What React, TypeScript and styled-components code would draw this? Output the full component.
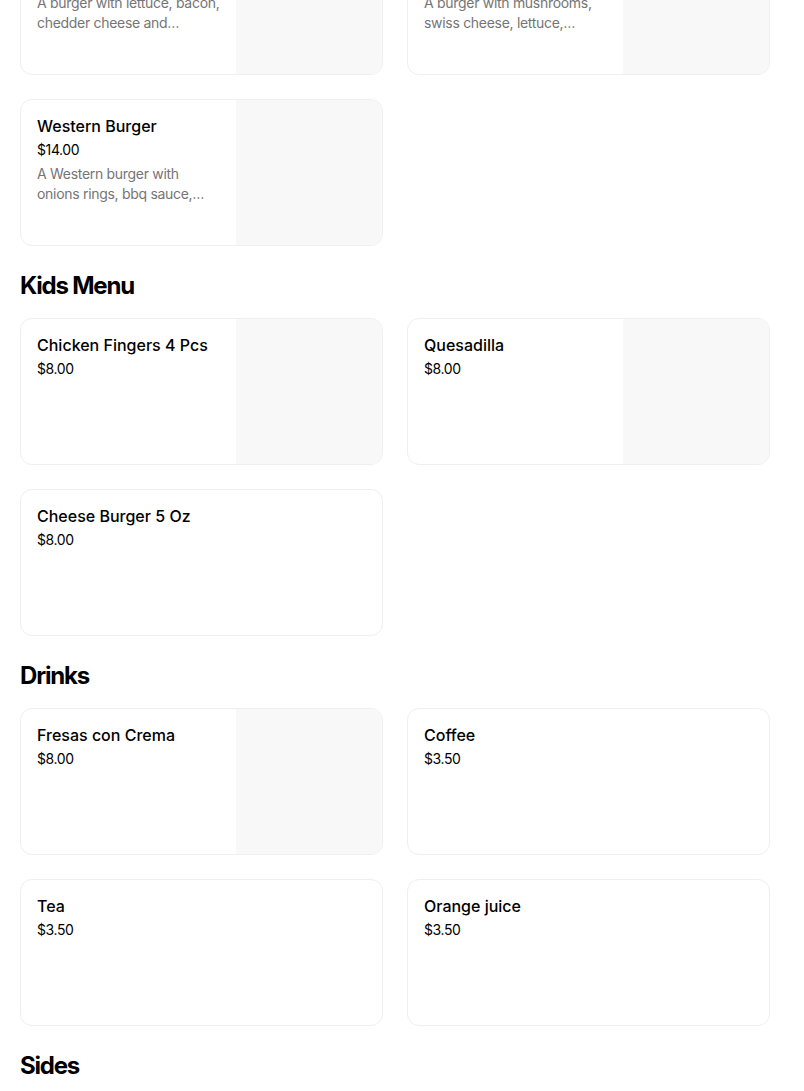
import React from "react";
import styled, { createGlobalStyle } from "styled-components";

const GlobalStyle = createGlobalStyle`
  html, body {
    margin: 0;
    padding: 0;
    background: #ffffff;
  }
  body {
    font-family: Inter, Roboto, "Noto Sans", "Liberation Sans", sans-serif;
    color: #000000;
    -webkit-font-smoothing: antialiased;
  }
  * { box-sizing: border-box; }
`;

const Page = styled.main`
  width: 750px;
  margin: -72px 0 0 20px;
  display: flex;
  flex-direction: column;
`;

const Section = styled.section`
  display: flex;
  flex-direction: column;
`;

const SectionTitle = styled.h2`
  margin: 24px 0 16px;
  font-family: Inter, "Noto Sans", sans-serif;
  font-size: 24px;
  line-height: 32px;
  font-weight: 700;
  letter-spacing: -1.2px;
  color: #000000;
`;

const Grid = styled.div`
  display: grid;
  grid-template-columns: 1fr 1fr;
  gap: 24px;
`;

const Card = styled.article`
  height: 147px;
  display: flex;
  border: 1px solid #efefef;
  border-radius: 12px;
  overflow: hidden;
  background: #ffffff;
`;

const Info = styled.div`
  flex: 1;
  min-width: 0;
  padding: 16px;
  display: flex;
  flex-direction: column;
  gap: 4px;
`;

const Name = styled.h3`
  margin: 0;
  font-size: 16px;
  line-height: 20px;
  font-weight: 500;
  color: #000000;
`;

const Price = styled.div`
  font-size: 14px;
  line-height: 20px;
  font-weight: 400;
  color: #000000;
  letter-spacing: -0.4px;
`;

const Description = styled.p`
  margin: 0;
  font-size: 14px;
  line-height: 20px;
  letter-spacing: -0.3px;
  color: #757575;
  display: -webkit-box;
  -webkit-line-clamp: 2;
  -webkit-box-orient: vertical;
  overflow: hidden;
`;

const Photo = styled.div`
  flex: 0 0 146px;
  background: #f8f8f8;
`;

type Item = {
  name: string;
  price: string;
  description?: string;
  photo?: boolean;
};

type MenuSection = {
  title?: string;
  items: Item[];
};

const sections: MenuSection[] = [
  {
    items: [
      {
        name: "Bacon Burger",
        price: "$14.00",
        description: "A burger with lettuce, bacon, chedder cheese and tomatoes on a brioche bun.",
        photo: true,
      },
      {
        name: "Swiss Burger",
        price: "$14.00",
        description: "A burger with mushrooms, swiss cheese, lettuce, tomato and onions.",
        photo: true,
      },
      {
        name: "Western Burger",
        price: "$14.00",
        description: "A Western burger with onions rings, bbq sauce, bacon and cheddar cheese.",
        photo: true,
      },
    ],
  },
  {
    title: "Kids Menu",
    items: [
      { name: "Chicken Fingers 4 Pcs", price: "$8.00", photo: true },
      { name: "Quesadilla", price: "$8.00", photo: true },
      { name: "Cheese Burger 5 Oz", price: "$8.00" },
    ],
  },
  {
    title: "Drinks",
    items: [
      { name: "Fresas con Crema", price: "$8.00", photo: true },
      { name: "Coffee", price: "$3.50" },
      { name: "Tea", price: "$3.50" },
      { name: "Orange juice", price: "$3.50" },
    ],
  },
  {
    title: "Sides",
    items: [
      { name: "French Fries", price: "$4.00", photo: true },
      { name: "Onion Rings", price: "$5.00", photo: true },
    ],
  },
];

const MenuCard = ({ item }: { item: Item }) => (
  <Card>
    <Info>
      <Name>{item.name}</Name>
      <Price>{item.price}</Price>
      {item.description && <Description>{item.description}</Description>}
    </Info>
    {item.photo && <Photo />}
  </Card>
);

export default function App() {
  return (
    <>
      <GlobalStyle />
      <Page>
        {sections.map((section, i) => (
          <Section key={i}>
            {section.title && <SectionTitle>{section.title}</SectionTitle>}
            <Grid>
              {section.items.map((item) => (
                <MenuCard key={item.name} item={item} />
              ))}
            </Grid>
          </Section>
        ))}
      </Page>
    </>
  );
}
